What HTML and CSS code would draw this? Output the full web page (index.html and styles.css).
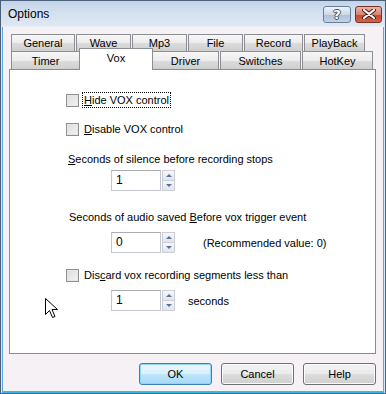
FILE: index.html
```html
<!DOCTYPE html>
<html>
<head>
<meta charset="utf-8">
<title>Options</title>
<link rel="stylesheet" href="styles.css">
</head>
<body>
<div class="window">
  <div class="titlebar">
    <span class="title">Options</span>
    <div class="caption-buttons">
      <div class="cap-btn help-btn"><span>?</span></div>
      <div class="cap-btn close-btn">
        <svg width="14" height="10" viewBox="0 0 14 10"><path d="M2 1 L12 9 M12 1 L2 9" stroke="#4a1a12" stroke-width="4" stroke-linecap="round"/><path d="M2 1 L12 9 M12 1 L2 9" stroke="#fff" stroke-width="2.2" stroke-linecap="round"/></svg>
      </div>
    </div>
  </div>

  <div class="tabs">
    <div class="tab-row row1">
      <div class="tab t-general">General</div>
      <div class="tab t-wave">Wave</div>
      <div class="tab t-mp3">Mp3</div>
      <div class="tab t-file">File</div>
      <div class="tab t-record">Record</div>
      <div class="tab t-playback">PlayBack</div>
    </div>
    <div class="tab-row row2">
      <div class="tab t-timer">Timer</div>
      <div class="tab t-vox selected">Vox</div>
      <div class="tab t-driver">Driver</div>
      <div class="tab t-switches">Switches</div>
      <div class="tab t-hotkey">HotKey</div>
    </div>
  </div>

  <div class="panel">
    <div class="check-row r-hide">
      <span class="checkbox"></span>
      <span class="label focus"><u>H</u>ide VOX control</span>
    </div>
    <div class="check-row r-disable">
      <span class="checkbox"></span>
      <span class="label"><u>D</u>isable VOX control</span>
    </div>
    <div class="text-row r-silence"><u>S</u>econds of silence before recording stops</div>
    <div class="spin-row r-spin1">
      <div class="spin">
        <div class="edit">1</div>
        <div class="arrows"><span class="arr up"></span><span class="arr down"></span></div>
      </div>
    </div>
    <div class="text-row r-audio">Seconds of audio saved <u>B</u>efore vox trigger event</div>
    <div class="spin-row r-spin2">
      <div class="spin">
        <div class="edit">0</div>
        <div class="arrows"><span class="arr up"></span><span class="arr down"></span></div>
      </div>
      <span class="note rec">(Recommended value: 0)</span>
    </div>
    <div class="check-row r-discard">
      <span class="checkbox"></span>
      <span class="label">Dis<u>c</u>ard vox recording segments less than</span>
    </div>
    <div class="spin-row r-spin3">
      <div class="spin">
        <div class="edit">1</div>
        <div class="arrows"><span class="arr up"></span><span class="arr down"></span></div>
      </div>
      <span class="note secs">seconds</span>
    </div>
    <svg class="cursor" width="14" height="21" viewBox="0 0 14 21">
      <path d="M0.5 0.5 L0.5 16.5 L4.5 12.5 L7.5 19.5 L10 18.5 L7 11.5 L12.5 11.5 Z" fill="#fff" stroke="#000" stroke-width="1" stroke-linejoin="miter"/>
    </svg>
  </div>

  <div class="buttons">
    <div class="btn default">OK</div>
    <div class="btn">Cancel</div>
    <div class="btn">Help</div>
  </div>
</div>
</body>
</html>
```

FILE: styles.css
```css
html, body {
  margin: 0;
  padding: 0;
  background: #f6f1f4;
}

.window {
  position: relative;
  width: 386px;
  height: 394px;
  box-sizing: border-box;
  border: 1px solid #4c5f78;
  border-bottom-color: #2f6c94;
  box-shadow: inset 1px 0 0 #dbe9f6, inset 2px 0 0 #5ea6dc, inset -1px 0 0 #dbe9f6, inset -2px 0 0 #5ea6dc, inset 0 -2px 0 #3fb7df;
  background: #f6f1f4;
  font-family: "Liberation Sans", Arial, sans-serif;
  font-size: 11px;
  color: #000;
  display: flex;
  flex-direction: column;
}

/* title bar */
.titlebar {
  height: 25px;
  display: flex;
  align-items: center;
  justify-content: space-between;
  background: linear-gradient(#c3d4e8, #d3e0ef 45%, #dfe8f3);
  border-bottom: 1px solid #e8eef6;
}
.title {
  font-size: 12px;
  padding-left: 7px;
  margin-top: 1px;
  color: #000;
}
.caption-buttons {
  display: flex;
  gap: 4px;
  padding-right: 3px;
  margin-top: 1px;
}
.cap-btn {
  height: 15px;
  border-radius: 3px;
  display: flex;
  align-items: center;
  justify-content: center;
}
.help-btn {
  width: 26px;
  border: 1px solid #6b7f9c;
  background: linear-gradient(#eef3f9, #cbd8e8 50%, #aebfd6 51%, #c4d3e6);
}
.help-btn span {
  font-family: "DejaVu Sans", sans-serif;
  font-weight: bold;
  font-size: 13px;
  color: #fff;
  line-height: 15px;
  text-shadow: 1px 0 0 #3f4f66, -1px 0 0 #3f4f66, 0 1px 0 #3f4f66, 0 -1px 0 #3f4f66;
}
.close-btn {
  width: 25px;
  border: 1px solid #7a3226;
  background: linear-gradient(#eab4a7, #d7826e 50%, #c24a31 51%, #d0624a);
}

/* tabs */
.tabs {
  margin-top: 7px;
  margin-left: 10px;
  position: relative;
  z-index: 2;
}
.tab-row {
  display: flex;
  height: 17px;
}
.row2 {
  height: 18px;
}
.tab {
  box-sizing: border-box;
  border: 1px solid #8c8e94;
  border-bottom: none;
  background: linear-gradient(#f7f7f7, #ececec 50%, #dcdcdc 51%, #cfcfcf);
  text-align: center;
  line-height: 17px;
  height: 100%;
  margin-right: 1px;
}
.row2 .tab {
  line-height: 19px;
}
.t-general { width: 64px; }
.t-wave { width: 55px; }
.t-mp3 { width: 55px; }
.t-file { width: 55px; }
.t-record { width: 59px; }
.t-playback { width: 61px; }

.t-timer { width: 69px; margin-right: 0; }
.t-vox { width: 72px; margin-right: 0; }
.t-driver { width: 67px; }
.t-switches { width: 81px; }
.t-hotkey { width: 71px; }

.tab.selected {
  background: #fff;
  height: 22px;
  margin-top: -3px;
  margin-left: -1px;
  width: 74px;
  margin-right: -1px;
  line-height: 18px;
  position: relative;
  z-index: 3;
}

/* panel */
.panel {
  position: relative;
  z-index: 1;
  margin-left: 8px;
  width: 367px;
  height: 285px;
  box-sizing: border-box;
  border: 1px solid #898c95;
  background: #fff;
  display: flex;
  flex-direction: column;
}

.check-row {
  display: flex;
  align-items: center;
  height: 14px;
  padding-left: 56px;
  gap: 3px;
}
.checkbox {
  width: 11px;
  height: 11px;
  border: 1px solid #8f8f8f;
  background: linear-gradient(135deg, #dcdcdc, #f4f4f4);
  box-shadow: inset 0 0 0 1px #e6e6e6;
}
.label {
  line-height: 14px;
  padding: 0 1px;
  border: 1px dotted transparent;
}
.label.focus {
  border-color: #000;
}
.r-hide { margin-top: 23px; }
.r-disable { margin-top: 15px; }
.r-discard { margin-top: 15px; }

.text-row {
  height: 14px;
  line-height: 14px;
}
.r-silence { margin-top: 16px; padding-left: 58px; }
.r-audio { margin-top: 19px; padding-left: 59px; }

.spin-row {
  display: flex;
  align-items: center;
  padding-left: 101px;
  height: 21px;
}
.r-spin1 { margin-top: 4px; }
.r-spin2 { margin-top: 8px; }
.r-spin3 { margin-top: 8px; }

.spin {
  display: flex;
  height: 21px;
}
.edit {
  box-sizing: border-box;
  width: 50px;
  height: 21px;
  border: 1px solid #c3c6ce;
  border-top-color: #abadb3;
  background: #fff;
  padding-left: 4px;
  line-height: 19px;
  font-size: 12px;
}
.arrows {
  display: flex;
  flex-direction: column;
  width: 13px;
  margin-left: 1px;
  height: 21px;
}
.arr {
  flex: 1;
  box-sizing: border-box;
  border: 1px solid #ccced6;
  background: linear-gradient(#f8f8fa, #e2e4ea);
  position: relative;
}
.arr + .arr {
  border-top: none;
}
.arr::after {
  content: "";
  position: absolute;
  left: 3px;
  top: 3px;
  border-left: 3px solid transparent;
  border-right: 3px solid transparent;
}
.arr.up::after {
  border-bottom: 3px solid #5670a0;
}
.arr.down::after {
  top: 3px;
  border-top: 3px solid #5670a0;
}

.note {
  line-height: 14px;
}
.rec { margin-left: 28px; }
.secs { margin-left: 13px; }

.cursor {
  position: absolute;
  left: 35px;
  top: 228px;
}

/* bottom buttons */
.buttons {
  display: flex;
  justify-content: flex-end;
  gap: 9px;
  margin-top: 9px;
  padding-right: 9px;
}
.btn {
  box-sizing: border-box;
  width: 73px;
  height: 22px;
  border: 1px solid #707070;
  border-radius: 3px;
  background: linear-gradient(#f3f3f3, #ebebeb 50%, #dddddd 51%, #cfcfcf);
  box-shadow: inset 0 0 0 1px #fbfbfb;
  text-align: center;
  line-height: 20px;
}
.btn.default {
  border-color: #3c7fb1;
  background: linear-gradient(#eaf6fd, #d9f0fc 50%, #bee6fd 51%, #a7d9f5);
  box-shadow: inset 0 0 0 1px #8fd8f4;
}
```
